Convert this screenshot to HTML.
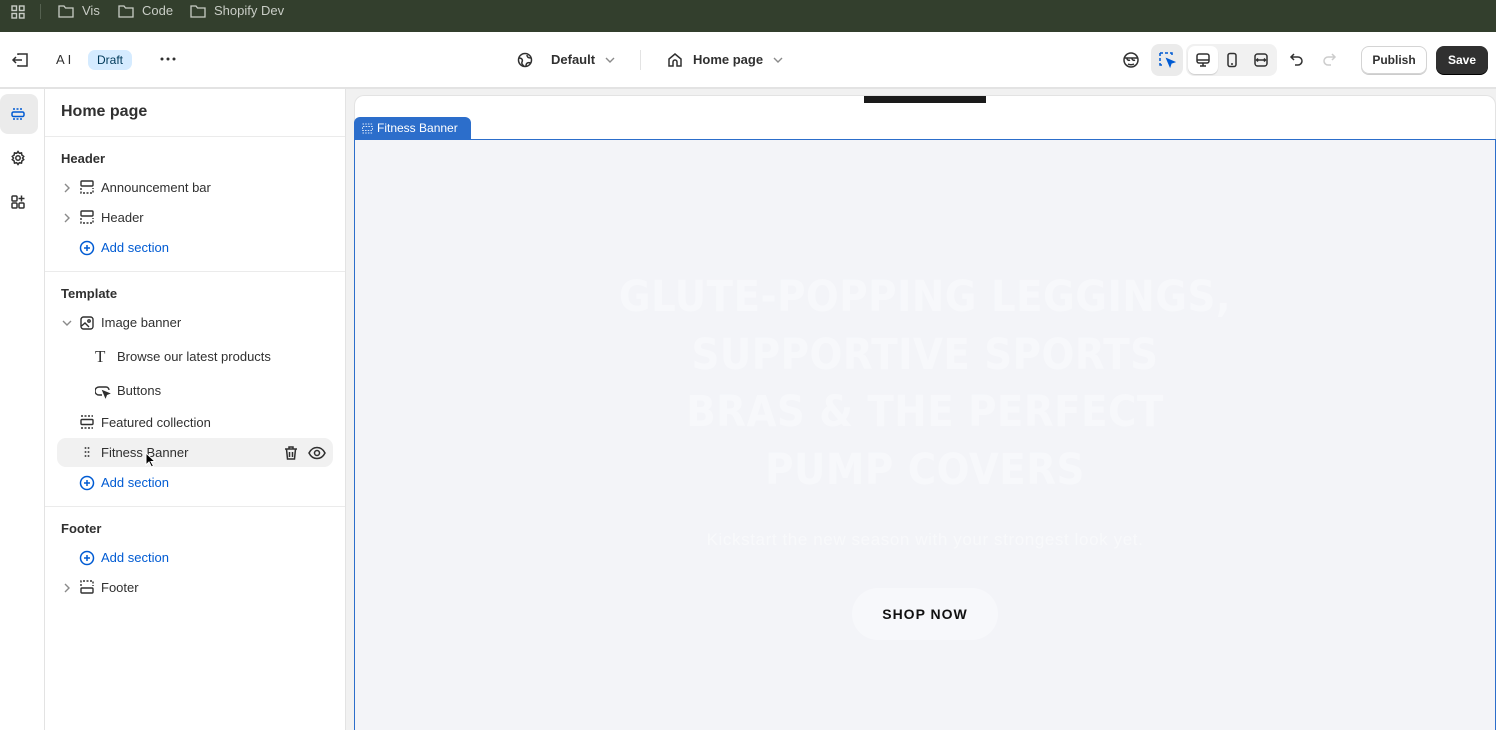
<!DOCTYPE html>
<html style="width:1496px;height:730px;overflow:hidden"><head><meta charset="utf-8"><style>
*{margin:0;padding:0;box-sizing:border-box}
body{width:1496px;height:730px;overflow:hidden;background:#fff;font-family:"Liberation Sans",sans-serif;color:#303030;position:relative}
.a{position:absolute}
svg{display:block}
.t{font-size:13px;color:#303030}
</style></head><body>
<div class="a" style="left:0;top:0;width:1496px;height:32px;background:#333f2d"></div>
<svg class="a" style="left:10px;top:4px" width="16" height="16" viewBox="0 0 16 16" fill="none" stroke="#c9cdc6" stroke-width="1.4"><rect x="2" y="2" width="4.5" height="4.5"/><rect x="9.5" y="2" width="4.5" height="4.5"/><rect x="2" y="9.5" width="4.5" height="4.5"/><rect x="9.5" y="9.5" width="4.5" height="4.5"/></svg>
<div class="a" style="left:40px;top:4px;width:1px;height:15px;background:#556150"></div>
<svg class="a" style="left:58px;top:4px" width="16" height="14" viewBox="0 0 16 14" fill="none" stroke="#c9cdc6" stroke-width="1.3"><path d="M1 2h5l1.5 2H15v9H1z"/></svg>
<div class="a" style="left:82px;top:3px;font-size:13px;color:#c9cdc6">Vis</div>
<svg class="a" style="left:118px;top:4px" width="16" height="14" viewBox="0 0 16 14" fill="none" stroke="#c9cdc6" stroke-width="1.3"><path d="M1 2h5l1.5 2H15v9H1z"/></svg>
<div class="a" style="left:142px;top:3px;font-size:13px;color:#c9cdc6">Code</div>
<svg class="a" style="left:190px;top:4px" width="16" height="14" viewBox="0 0 16 14" fill="none" stroke="#c9cdc6" stroke-width="1.3"><path d="M1 2h5l1.5 2H15v9H1z"/></svg>
<div class="a" style="left:214px;top:3px;font-size:13px;color:#c9cdc6">Shopify Dev</div>

<div class="a" style="left:0;top:87px;width:1496px;height:2px;background:#e3e3e3"></div>
<svg class="a" style="left:11px;top:52px" width="18" height="16" viewBox="0 0 18 16" fill="none" stroke="#303030" stroke-width="1.5"><path d="M7 3V2h9v12H7v-1"/><path d="M11 8H2M5 5 2 8l3 3"/></svg>
<div class="a" style="left:56px;top:52px;font-size:13px">A I</div>
<div class="a" style="left:88px;top:50px;width:44px;height:20px;border-radius:7px;background:#d5ebff;color:#003a5a;font-size:12px;text-align:center;line-height:20px">Draft</div>
<svg class="a" style="left:160px;top:57px" width="16" height="4" viewBox="0 0 16 4" fill="#303030"><circle cx="2" cy="2" r="1.5"/><circle cx="8" cy="2" r="1.5"/><circle cx="14" cy="2" r="1.5"/></svg>
<svg class="a" style="left:517px;top:52px" width="16" height="16" viewBox="0 0 16 16" fill="none" stroke="#303030" stroke-width="1.5"><circle cx="8" cy="8" r="6.5"/><path d="M2 6c3 0 4 2 3 4s1 3 2 4M14 6c-3 0-4-1-4-3M9 14c0-3 2-4 4.5-3"/></svg>
<div class="a" style="left:551px;top:52px;font-size:13px;font-weight:bold;color:#303030">Default</div>
<svg class="a" style="left:604px;top:56px" width="12" height="8" viewBox="0 0 12 8" fill="none" stroke="#8a8a8a" stroke-width="1.4"><path d="M2 2l4 4 4-4"/></svg>
<div class="a" style="left:640px;top:50px;width:1px;height:20px;background:#e3e3e3"></div>
<svg class="a" style="left:667px;top:52px" width="16" height="16" viewBox="0 0 16 16" fill="none" stroke="#303030" stroke-width="1.5"><path d="M2 14V7l6-5 6 5v7h-4v-4a2 2 0 0 0-4 0v4z"/></svg>
<div class="a" style="left:693px;top:52px;font-size:13px;font-weight:bold">Home page</div>
<svg class="a" style="left:772px;top:56px" width="12" height="8" viewBox="0 0 12 8" fill="none" stroke="#8a8a8a" stroke-width="1.4"><path d="M2 2l4 4 4-4"/></svg>

<svg class="a" style="left:1122px;top:51px" width="18" height="18" viewBox="0 0 18 18" fill="none" stroke="#303030" stroke-width="1.5"><circle cx="9" cy="9" r="7"/><path d="M3 7h12M5 7a2 2 0 0 0 3 2M10 7a2 2 0 0 0 3 2M6 13c2 1 4 1 6 0"/></svg>
<div class="a" style="left:1151px;top:44px;width:32px;height:32px;border-radius:8px;background:#ebebeb"></div>
<svg class="a" style="left:1158px;top:51px" width="18" height="18" viewBox="0 0 18 18" fill="none" stroke="#005bd3" stroke-width="1.5"><path d="M2 2h3M7 2h3M2 2v3M2 7v3M12 2h2v2M2 12v2h2"/><path d="M9 8l7 3-3 1-1 3z" fill="#005bd3"/></svg>
<div class="a" style="left:1186px;top:44px;width:91px;height:32px;border-radius:8px;background:#f1f1f1"></div>
<div class="a" style="left:1188px;top:46px;width:30px;height:28px;border-radius:7px;background:#fff;box-shadow:0 1px 1px rgba(0,0,0,.15)"></div>
<svg class="a" style="left:1195px;top:52px" width="16" height="16" viewBox="0 0 16 16" fill="none" stroke="#303030" stroke-width="1.5"><rect x="2" y="2" width="12" height="9" rx="2"/><path d="M2 8h12M8 11v3M5 14h6"/></svg>
<svg class="a" style="left:1224px;top:52px" width="16" height="16" viewBox="0 0 16 16" fill="none" stroke="#303030" stroke-width="1.5"><rect x="4" y="1.5" width="8" height="13" rx="2"/><path d="M7 12h2"/></svg>
<svg class="a" style="left:1253px;top:52px" width="16" height="16" viewBox="0 0 16 16" fill="none" stroke="#303030" stroke-width="1.5"><rect x="2" y="2" width="12" height="12" rx="2.5"/><path d="M4 8h8M5 6.5 3.5 8 5 9.5M11 6.5 12.5 8 11 9.5"/></svg>
<svg class="a" style="left:1289px;top:52px" width="16" height="16" viewBox="0 0 16 16" fill="none" stroke="#303030" stroke-width="1.5"><path d="M5 2 2 5l3 3M2 5h7a4 4 0 0 1 0 8H6"/></svg>
<svg class="a" style="left:1321px;top:52px" width="16" height="16" viewBox="0 0 16 16" fill="none" stroke="#cccccc" stroke-width="1.5"><path d="M11 2l3 3-3 3M14 5H7a4 4 0 0 0 0 8h3"/></svg>
<div class="a" style="left:1361px;top:46px;width:66px;height:28px;border:1px solid #d4d4d4;border-radius:8px;font-size:12px;font-weight:bold;text-align:center;line-height:26px;box-shadow:0 1px 0 #ccc">Publish</div>
<div class="a" style="left:1436px;top:46px;width:52px;height:28px;background:#303030;border-radius:8px;color:#fff;font-size:12px;font-weight:bold;text-align:center;line-height:28px;box-shadow:0 1px 0 #000">Save</div>

<div class="a" style="left:44px;top:89px;width:1px;height:641px;background:#e3e3e3"></div>
<div class="a" style="left:0;top:94px;width:38px;height:40px;border-radius:8px;background:#ebebeb"></div>
<svg class="a" style="left:10px;top:106px" width="16" height="16" viewBox="0 0 16 16" fill="none" stroke="#005bd3" stroke-width="1.5"><path d="M3 3h10M3 13h10" stroke-dasharray="2 1.5"/><rect x="2" y="6" width="12" height="4.5" rx="1.5"/></svg>
<svg class="a" style="left:10px;top:150px" width="16" height="16" viewBox="0 0 16 16" fill="none" stroke="#303030" stroke-width="1.5"><circle cx="8" cy="8" r="2.2"/><path d="M8 1.5l1.3 1.8 2.2-.4.4 2.2 1.8 1.3-1.2 1.6 1.2 1.6-1.8 1.3-.4 2.2-2.2-.4L8 14.5l-1.3-1.8-2.2.4-.4-2.2L2.3 9.6 3.5 8 2.3 6.4l1.8-1.3.4-2.2 2.2.4z"/></svg>
<svg class="a" style="left:10px;top:194px" width="16" height="16" viewBox="0 0 16 16" fill="none" stroke="#303030" stroke-width="1.5"><rect x="2" y="2" width="5" height="5" rx="1"/><rect x="2" y="9" width="5" height="5" rx="1"/><rect x="9" y="9" width="5" height="5" rx="1"/><path d="M11.5 1.5v6M8.5 4.5h6"/></svg>

<div class="a" style="left:345px;top:89px;width:1px;height:641px;background:#e3e3e3"></div>
<div class="a" style="left:61px;top:103px;font-size:16px;font-weight:bold;color:#303030">Home page</div>
<div class="a" style="left:45px;top:136px;width:300px;height:1px;background:#ebebeb"></div>
<div class="a" style="left:61px;top:151px;font-size:13px;font-weight:bold">Header</div>

<svg class="a" style="left:62px;top:182px" width="10" height="12" viewBox="0 0 10 12" fill="none" stroke="#8a8a8a" stroke-width="1.4"><path d="M3 2l4 4-4 4"/></svg>
<svg class="a" style="left:80px;top:180px" width="14" height="14" viewBox="0 0 14 14" fill="none" stroke="#303030" stroke-width="1.4"><rect x="1" y="1" width="12" height="5" rx="1"/><path d="M1 8v5h12V8" stroke-dasharray="2 1.5"/></svg>
<div class="a t" style="left:101px;top:180px">Announcement bar</div>
<svg class="a" style="left:62px;top:212px" width="10" height="12" viewBox="0 0 10 12" fill="none" stroke="#8a8a8a" stroke-width="1.4"><path d="M3 2l4 4-4 4"/></svg>
<svg class="a" style="left:80px;top:210px" width="14" height="14" viewBox="0 0 14 14" fill="none" stroke="#303030" stroke-width="1.4"><rect x="1" y="1" width="12" height="5" rx="1"/><path d="M1 8v5h12V8" stroke-dasharray="2 1.5"/></svg>
<div class="a t" style="left:101px;top:210px">Header</div>
<svg class="a" style="left:79px;top:240px" width="16" height="16" viewBox="0 0 16 16" fill="none" stroke="#005bd3" stroke-width="1.5"><circle cx="8" cy="8" r="6.5"/><path d="M8 5v6M5 8h6"/></svg>
<div class="a t" style="left:101px;top:240px;color:#005bd3">Add section</div>
<div class="a" style="left:45px;top:271px;width:300px;height:1px;background:#ebebeb"></div>

<div class="a" style="left:61px;top:286px;font-size:13px;font-weight:bold">Template</div>
<svg class="a" style="left:61px;top:318px" width="12" height="10" viewBox="0 0 12 10" fill="none" stroke="#8a8a8a" stroke-width="1.4"><path d="M2 3l4 4 4-4"/></svg>
<svg class="a" style="left:80px;top:316px" width="14" height="14" viewBox="0 0 14 14" fill="none" stroke="#303030" stroke-width="1.4"><rect x="1" y="1" width="12" height="12" rx="2.5"/><circle cx="9" cy="5" r="1.2"/><path d="M1.5 10l3.5-3 4 4"/></svg>
<div class="a t" style="left:101px;top:315px">Image banner</div>
<div class="a" style="left:95px;top:347px;font-family:'Liberation Serif',serif;font-size:17px;color:#303030">T</div>
<div class="a t" style="left:117px;top:349px">Browse our latest products</div>
<svg class="a" style="left:95px;top:383px" width="16" height="16" viewBox="0 0 16 16" fill="none" stroke="#303030" stroke-width="1.4"><path d="M7 12H4a3 3 0 0 1 0-8h7a3 3 0 0 1 3 3"/><path d="M8 8l6 2.5-2.5 1-1 2.5z" fill="#303030"/></svg>
<div class="a t" style="left:117px;top:383px">Buttons</div>
<svg class="a" style="left:80px;top:415px" width="14" height="14" viewBox="0 0 14 14" fill="none" stroke="#303030" stroke-width="1.4"><path d="M1 1h12M1 13h12" stroke-dasharray="2 1.5"/><rect x="1" y="4.5" width="12" height="5" rx="1"/></svg>
<div class="a t" style="left:101px;top:415px">Featured collection</div>
<div class="a" style="left:57px;top:438px;width:276px;height:29px;border-radius:9px;background:#f1f1f1"></div>
<div class="a" style="left:84px;top:446px;width:6px;height:12px;background:radial-gradient(circle,#555 0.9px,transparent 1.1px) 0 0/3px 4px"></div>
<div class="a t" style="left:101px;top:445px">Fitness Banner</div>
<svg class="a" style="left:145px;top:452px" width="11" height="16" viewBox="0 0 11 16"><path d="M1 1v12l3-3 2.5 5 2-1-2.5-4.5H10z" fill="#000" stroke="#fff" stroke-width="1"/></svg>
<svg class="a" style="left:283px;top:445px" width="16" height="16" viewBox="0 0 16 16" fill="none" stroke="#303030" stroke-width="1.5"><path d="M2 4h12M6 4V2h4v2M3.5 4l1 10h7l1-10M6.5 7v5M9.5 7v5"/></svg>
<svg class="a" style="left:308px;top:445px" width="18" height="16" viewBox="0 0 18 16" fill="none" stroke="#303030" stroke-width="1.5"><path d="M1 8c2-4 5-5.5 8-5.5S15 4 17 8c-2 4-5 5.5-8 5.5S3 12 1 8z"/><circle cx="9" cy="8" r="2.5"/></svg>
<svg class="a" style="left:79px;top:475px" width="16" height="16" viewBox="0 0 16 16" fill="none" stroke="#005bd3" stroke-width="1.5"><circle cx="8" cy="8" r="6.5"/><path d="M8 5v6M5 8h6"/></svg>
<div class="a t" style="left:101px;top:475px;color:#005bd3">Add section</div>
<div class="a" style="left:45px;top:506px;width:300px;height:1px;background:#ebebeb"></div>
<div class="a" style="left:61px;top:521px;font-size:13px;font-weight:bold">Footer</div>
<svg class="a" style="left:79px;top:550px" width="16" height="16" viewBox="0 0 16 16" fill="none" stroke="#005bd3" stroke-width="1.5"><circle cx="8" cy="8" r="6.5"/><path d="M8 5v6M5 8h6"/></svg>
<div class="a t" style="left:101px;top:550px;color:#005bd3">Add section</div>
<svg class="a" style="left:62px;top:582px" width="10" height="12" viewBox="0 0 10 12" fill="none" stroke="#8a8a8a" stroke-width="1.4"><path d="M3 2l4 4-4 4"/></svg>
<svg class="a" style="left:80px;top:580px" width="14" height="14" viewBox="0 0 14 14" fill="none" stroke="#303030" stroke-width="1.4"><path d="M1 6V1h12v5" stroke-dasharray="2 1.5"/><rect x="1" y="8" width="12" height="5" rx="1"/></svg>
<div class="a t" style="left:101px;top:580px">Footer</div>

<div class="a" style="left:346px;top:89px;width:1150px;height:641px;background:#f1f1f1"></div>
<div class="a" style="left:354px;top:95px;width:1142px;height:635px;background:#fff;border:1px solid #e3e3e3;border-bottom:none;border-radius:10px 10px 0 0"></div>
<div class="a" style="left:864px;top:96px;width:122px;height:7px;background:#1a1a1a"></div>
<div class="a" style="left:354px;top:139px;width:1142px;height:600px;background:#f3f4f8;border:1px solid #2c6ecb"></div>
<div class="a" style="left:354px;top:117px;width:117px;height:23px;background:#2c6ecb;border-radius:6px 6px 0 0"></div>
<svg class="a" style="left:362px;top:123px" width="11" height="11" viewBox="0 0 11 11" fill="none" stroke="#dce8fa" stroke-width="1.1"><path d="M0.5 1h10M0.5 10h10" stroke-dasharray="1.5 1.2"/><rect x="0.5" y="3.5" width="10" height="4" rx="0.5" stroke-dasharray="1.5 1.2"/></svg>
<div class="a" style="left:377px;top:121px;font-size:12px;color:#fff">Fitness Banner</div>

<div class="a" style="left:354px;top:269px;width:1142px;text-align:center;font-family:'DejaVu Sans Condensed','DejaVu Sans',sans-serif;font-weight:bold;font-size:43px;line-height:57.5px;color:#f7f8fb;letter-spacing:0.5px">GLUTE-POPPING LEGGINGS,<br>SUPPORTIVE SPORTS<br>BRAS &amp; THE PERFECT<br>PUMP COVERS</div>
<div class="a" style="left:354px;top:530px;width:1142px;text-align:center;font-size:17px;letter-spacing:0.6px;color:#f8f9fb">Kickstart the new season with your strongest look yet.</div>
<div class="a" style="left:852px;top:588px;width:146px;height:52px;border-radius:26px;background:#f7f8fb;text-align:center;line-height:52px;font-size:14px;font-weight:bold;color:#111;letter-spacing:1px">SHOP NOW</div>
</body></html>
